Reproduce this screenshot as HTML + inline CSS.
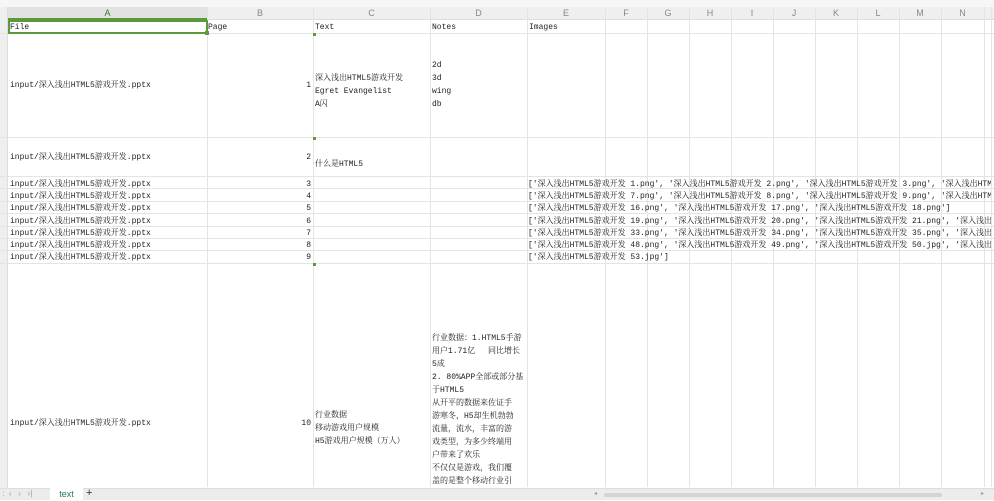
<!DOCTYPE html>
<html><head><meta charset="utf-8"><style>
*{margin:0;padding:0;box-sizing:border-box}
body{width:994px;height:500px;overflow:hidden;background:#fff;position:relative;font-family:"Liberation Mono","Noto Serif CJK SC",monospace;font-size:8px;color:#222}
.a{position:absolute;white-space:nowrap}
.v{position:absolute;top:7px;bottom:13px;width:1px;background:#e4e4e4}
.h{position:absolute;left:0;right:0;height:1px;background:#e4e4e4}
.hd{position:absolute;top:7px;height:13px;font-family:"Liberation Sans",sans-serif;font-size:9px;color:#888;text-align:center;line-height:13px}
.t{position:absolute;white-space:nowrap;line-height:13px}
.r{text-align:right}
</style></head><body>
<div class="a" style="left:0;top:0;width:994px;height:7px;background:#f6f6f6"></div>
<div class="a" style="left:0;top:7px;width:994px;height:13px;background:#efefef;border-bottom:1px solid #ddd"></div>
<div class="a" style="left:8px;top:7px;width:199px;height:13px;background:#e2e2e2;border-bottom:2px solid #5a9a3a"></div>
<div class="a" style="left:0;top:7px;width:8px;height:481px;background:#efefef;border-right:1px solid #ddd"></div>
<div class="v" style="left:207px"></div><div class="v" style="left:313px"></div><div class="v" style="left:430px"></div><div class="v" style="left:527px"></div><div class="v" style="left:605px"></div><div class="v" style="left:647px"></div><div class="v" style="left:689px"></div><div class="v" style="left:731px"></div><div class="v" style="left:773px"></div><div class="v" style="left:815px"></div><div class="v" style="left:857px"></div><div class="v" style="left:899px"></div><div class="v" style="left:941px"></div><div class="v" style="left:984px"></div><div class="v" style="left:991px"></div>
<div class="h" style="top:33px"></div><div class="h" style="top:137px"></div><div class="h" style="top:176px"></div><div class="h" style="top:188px"></div><div class="h" style="top:201px"></div><div class="h" style="top:213px"></div><div class="h" style="top:226px"></div><div class="h" style="top:238px"></div><div class="h" style="top:250px"></div><div class="h" style="top:263px"></div>
<div class="hd" style="left:8px;width:199px;color:#3a7a2a">A</div>
<div class="hd" style="left:207px;width:106px">B</div><div class="hd" style="left:313px;width:117px">C</div><div class="hd" style="left:430px;width:97px">D</div><div class="hd" style="left:527px;width:78px">E</div><div class="hd" style="left:605px;width:42px">F</div><div class="hd" style="left:647px;width:42px">G</div><div class="hd" style="left:689px;width:42px">H</div><div class="hd" style="left:731px;width:42px">I</div><div class="hd" style="left:773px;width:42px">J</div><div class="hd" style="left:815px;width:42px">K</div><div class="hd" style="left:857px;width:42px">L</div><div class="hd" style="left:899px;width:42px">M</div><div class="hd" style="left:941px;width:43px">N</div>
<div class="a" style="left:8px;top:20px;width:200px;height:14px;border:2px solid #5a9a3a"></div>
<div class="a" style="left:205px;top:31px;width:4px;height:4px;background:#5a9a3a"></div>
<div class="t" style="left:10px;top:21px">File</div>
<div class="t" style="left:208px;top:21px">Page</div>
<div class="t" style="left:315px;top:21px">Text</div>
<div class="t" style="left:432px;top:21px">Notes</div>
<div class="t" style="left:529px;top:21px">Images</div>
<div class="t" style="left:10px;top:79px">input/深入浅出HTML5游戏开发.pptx</div>
<div class="t r" style="left:207px;width:104px;top:79px">1</div>
<div class="t" style="left:315px;top:72px">深入浅出HTML5游戏开发<br>Egret Evangelist<br>A闪</div>
<div class="t" style="left:432px;top:59px">2d<br>3d<br>wing<br>db</div>
<div class="t" style="left:10px;top:151px">input/深入浅出HTML5游戏开发.pptx</div>
<div class="t r" style="left:207px;width:104px;top:151px">2</div>
<div class="t" style="left:315px;top:158px">什么是HTML5</div>
<div class="t" style="left:10px;top:178px">input/深入浅出HTML5游戏开发.pptx</div><div class="t r" style="left:207px;width:104px;top:178px">3</div>
<div class="t" style="left:10px;top:190px">input/深入浅出HTML5游戏开发.pptx</div><div class="t r" style="left:207px;width:104px;top:190px">4</div>
<div class="t" style="left:10px;top:202px">input/深入浅出HTML5游戏开发.pptx</div><div class="t r" style="left:207px;width:104px;top:202px">5</div>
<div class="t" style="left:10px;top:215px">input/深入浅出HTML5游戏开发.pptx</div><div class="t r" style="left:207px;width:104px;top:215px">6</div>
<div class="t" style="left:10px;top:227px">input/深入浅出HTML5游戏开发.pptx</div><div class="t r" style="left:207px;width:104px;top:227px">7</div>
<div class="t" style="left:10px;top:239px">input/深入浅出HTML5游戏开发.pptx</div><div class="t r" style="left:207px;width:104px;top:239px">8</div>
<div class="t" style="left:10px;top:251px">input/深入浅出HTML5游戏开发.pptx</div><div class="t r" style="left:207px;width:104px;top:251px">9</div>
<div class="a" style="left:528px;top:176px;width:463px;height:87px;overflow:hidden">
<div class="t" style="left:0;top:2px">['深入浅出HTML5游戏开发 1.png', '深入浅出HTML5游戏开发 2.png', '深入浅出HTML5游戏开发 3.png', '深入浅出HTML5游戏开发</div>
<div class="t" style="left:0;top:14px">['深入浅出HTML5游戏开发 7.png', '深入浅出HTML5游戏开发 8.png', '深入浅出HTML5游戏开发 9.png', '深入浅出HTML5游戏开发</div>
<div class="t" style="left:0;top:26px">['深入浅出HTML5游戏开发 16.png', '深入浅出HTML5游戏开发 17.png', '深入浅出HTML5游戏开发 18.png']</div>
<div class="t" style="left:0;top:39px">['深入浅出HTML5游戏开发 19.png', '深入浅出HTML5游戏开发 20.png', '深入浅出HTML5游戏开发 21.png', '深入浅出HTML5</div>
<div class="t" style="left:0;top:51px">['深入浅出HTML5游戏开发 33.png', '深入浅出HTML5游戏开发 34.png', '深入浅出HTML5游戏开发 35.png', '深入浅出HTML5</div>
<div class="t" style="left:0;top:63px">['深入浅出HTML5游戏开发 48.png', '深入浅出HTML5游戏开发 49.png', '深入浅出HTML5游戏开发 50.jpg', '深入浅出HTML5</div>
<div class="t" style="left:0;top:75px">['深入浅出HTML5游戏开发 53.jpg']</div>
</div>
<div class="t" style="left:10px;top:417px">input/深入浅出HTML5游戏开发.pptx</div>
<div class="t r" style="left:207px;width:104px;top:417px">10</div>
<div class="t" style="left:315px;top:409px">行业数据<br>移动游戏用户规模<br>H5游戏用户规模（万人）</div>
<div class="t" style="left:432px;top:332px;line-height:13px">行业数据：1.HTML5手游<br>用户1.71亿　 同比增长<br>5成<br>2. 80%APP全部或部分基<br>于HTML5<br>从开平的数据来佐证手<br>游寒冬，H5却生机勃勃<br>流量，流水，丰富的游<br>戏类型，为多少终端用<br>户带来了欢乐<br>不仅仅是游戏，我们覆<br>盖的是整个移动行业引</div>
<div class="a" style="left:313px;top:33px;width:3px;height:3px;background:#5a9a3a"></div>
<div class="a" style="left:313px;top:137px;width:3px;height:3px;background:#5a9a3a"></div>
<div class="a" style="left:313px;top:263px;width:3px;height:3px;background:#5a9a3a"></div>
<div class="a" style="left:0;top:488px;width:994px;height:12px;background:#ececec;border-top:1px solid #ddd"></div>
<div class="a" style="left:0;top:488px;font-family:'Liberation Sans',sans-serif;font-size:8px;color:#999;line-height:12px">&nbsp;:&nbsp;&nbsp;‹&nbsp;&nbsp;&nbsp;›&nbsp;&nbsp;&nbsp;›|</div>
<div class="a" style="left:50px;top:488px;width:33px;height:12px;background:#fff;font-family:'Liberation Sans',sans-serif;font-size:9px;color:#2a7a4a;text-align:center;line-height:13px">text</div>
<div class="a" style="left:86px;top:487px;font-family:'Liberation Sans',sans-serif;font-size:11px;color:#333;line-height:13px">+</div>
<div class="a" style="left:604px;top:493px;width:338px;height:4px;background:#d4d4d4;border-radius:2px"></div>
<div class="a" style="left:594px;top:488px;font-size:6px;color:#999;line-height:12px">◂</div>
<div class="a" style="left:981px;top:488px;font-size:6px;color:#999;line-height:12px">▸</div>
</body></html>
